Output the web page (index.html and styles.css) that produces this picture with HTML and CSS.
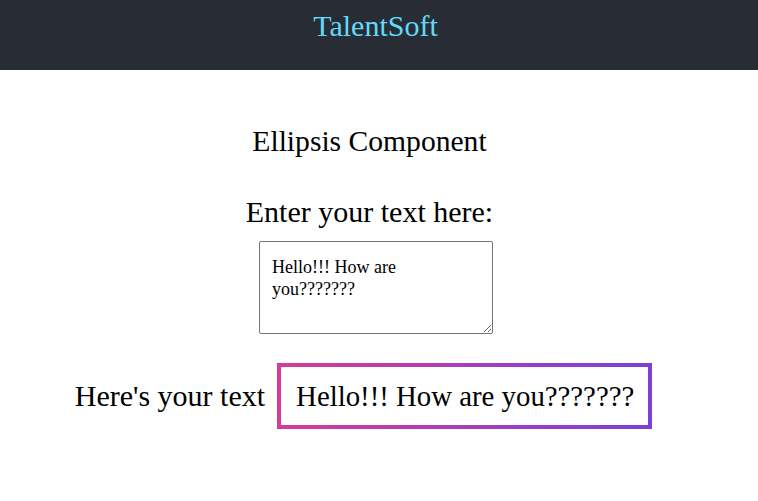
FILE: index.html
```html
<!DOCTYPE html>
<html>
<head>
<meta charset="utf-8">
<link rel="stylesheet" href="styles.css">
</head>
<body>
<header class="app-header">
  <h1 class="brand">TalentSoft</h1>
</header>
<main class="content">
  <h2 class="title">Ellipsis Component</h2>
  <label class="prompt" for="txt">Enter your text here:</label>
  <textarea id="txt" class="input">Hello!!! How are you???????</textarea>
  <div class="result">
    <span class="result-label">Here's your text</span>
    <div class="result-box">Hello!!! How are you???????</div>
  </div>
</main>
</body>
</html>
```
FILE: styles.css
```css
html, body {
  margin: 0;
  padding: 0;
  background: #ffffff;
  font-family: "Liberation Serif", "Times New Roman", serif;
  color: #000;
}

.app-header {
  height: 70px;
  background: #282c34;
  display: flex;
  justify-content: center;
  align-items: flex-start;
}

.brand {
  margin: 8px 7px 0 0;
  font-size: 30px;
  font-weight: normal;
  color: #61dafb;
  line-height: 36px;
}

.content {
  display: flex;
  flex-direction: column;
  align-items: center;
  padding-top: 51px;
}

.title {
  margin: 0 19px 0 0;
  font-size: 29.6px;
  font-weight: normal;
  line-height: 40px;
}

.prompt {
  margin: 33px 19px 0 0;
  font-size: 30px;
  line-height: 36px;
}

.input {
  margin: 11px 6px 0 0;
  box-sizing: border-box;
  width: 234px;
  height: 93px;
  padding: 14px 36px 12px 12px;
  border: 1px solid #767676;
  border-radius: 2px;
  font-family: "Liberation Serif", "Times New Roman", serif;
  font-size: 18px;
  line-height: 22px;
  color: #000;
  resize: both;
}

.result {
  display: flex;
  align-items: center;
  gap: 12px;
  margin: 29px 31px 0 0;
}

.result-label {
  font-size: 30px;
}

.result-box {
  border: 4px solid;
  border-image: linear-gradient(to right, #d63a9c, #7c40d8) 1;
  padding: 14px 14px 14px 15px;
  font-size: 28.8px;
  line-height: 30px;
}
```
